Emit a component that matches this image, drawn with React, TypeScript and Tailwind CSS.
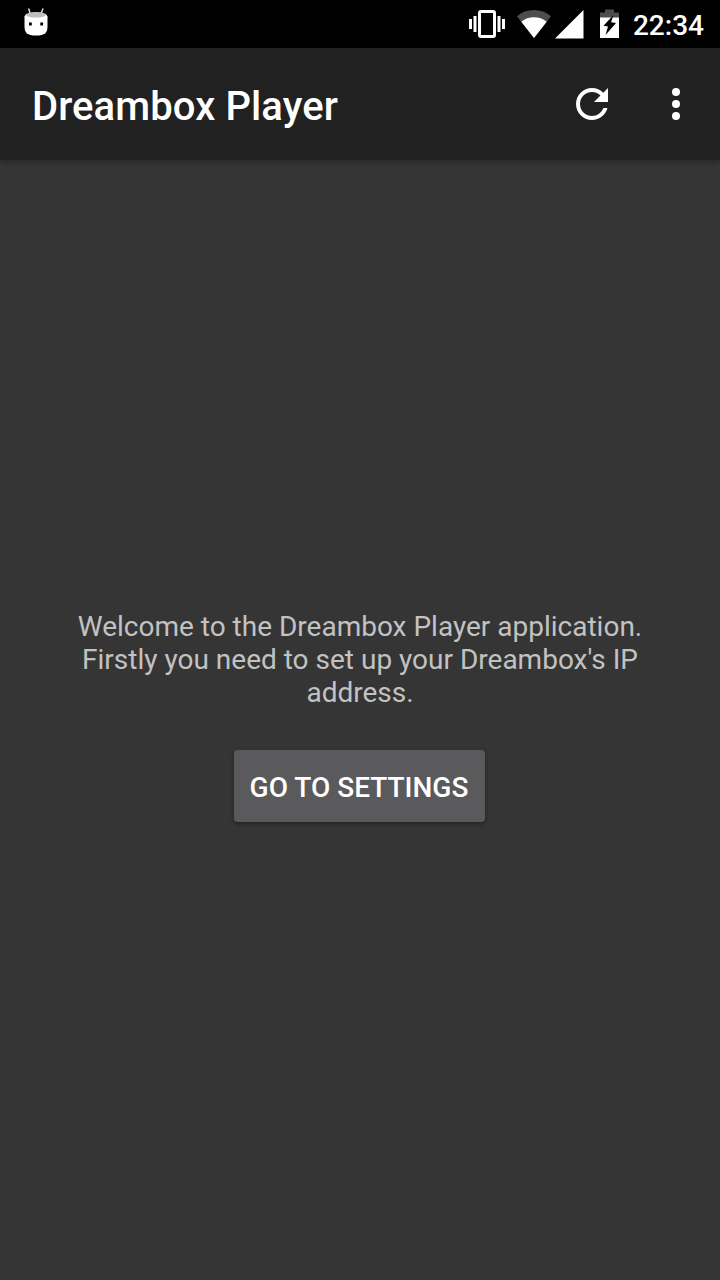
import type { ReactNode } from "react";

function AndroidIcon() {
    return (
        <svg width="24" height="28" viewBox="0 0 24 28" className="block">
            <path d="M6 5L4.8 1M17.4 5l1.4-4" stroke="#d8d8d8" strokeWidth="1.5" strokeLinecap="round" />
            <path d="M0.5 8.500C1.500 5.500 6 4.300 12 4.300s10.500 1.200 11.500 4.200v9.500c0 7-2.500 9.500-11.500 9.500S.5 25 .5 18z" fill="#fff" />
            <path d="M1.800 7.300C3.500 5.200 7.500 4.500 12 4.500s8.500.7 10.200 2.800c-1.700 1.700-5.700 2.300-10.200 2.300S3.500 9 1.800 7.300z" fill="#bdbdbd" />
            <path d="M5 14.500h2.800v3H5zM16.300 14.500h2.800v3h-2.800z" fill="#000" />
        </svg>
    );
}

function VibrateIcon() {
    return (
        <svg width="36" height="28" viewBox="0 0 36 28" className="block">
            <rect x="10.500" y="1.500" width="15" height="25" rx="1.500" fill="none" stroke="#fff" strokeWidth="3" />
            <path d="M0 9h3v10H0zM4.500 6h3v16h-3zM28.500 6h3v16h-3zM33 9h3v10h-3z" fill="#fff" />
        </svg>
    );
}

function WifiIcon() {
    return (
        <svg width="34" height="28" viewBox="0 0 34 28" className="block">
            <path d="M17 28L0 6.300C5 2.200 10.700 0 17 0s12 2.200 17 6.300z" fill="#4d4d4d" />
            <path d="M17 28L4.300 11.700C8 8.800 12.300 7.300 17 7.300s9 1.500 12.700 4.400z" fill="#fff" />
        </svg>
    );
}

function SignalIcon() {
    return (
        <svg width="29" height="29" viewBox="0 0 29 29" className="block">
            <path d="M0 28.500L28.500 0v28.500z" fill="#fff" />
        </svg>
    );
}

function BatteryIcon() {
    return (
        <svg width="19" height="28" viewBox="0 0 19 28" className="block overflow-visible">
            <path d="M5-.5h9v3h5V8H0V2.500h5z" fill="#4d4d4d" />
            <path d="M0 7.500h19V28H0z" fill="#fff" />
            <path d="M13.500 5L11 12.200l5 .8L5.500 25l2.500-8.500-4.500-.8z" fill="#000" />
        </svg>
    );
}

function RefreshIcon() {
    return (
        <svg width="48" height="48" viewBox="0 0 24 24" fill="#fff" className="block">
            <path d="M17.65 6.35C16.2 4.9 14.21 4 12 4c-4.42 0-7.99 3.58-7.99 8s3.57 8 7.99 8c3.73 0 6.84-2.55 7.73-6h-2.080c-.82 2.33-3.040 4-5.650 4-3.310 0-6-2.690-6-6s2.690-6 6-6c1.660 0 3.140.69 4.220 1.780L13 11h7V4l-2.350 2.350z" />
        </svg>
    );
}

function MoreIcon() {
    return (
        <svg width="48" height="48" viewBox="0 0 24 24" fill="#fff" className="block">
            <circle cx="12" cy="6" r="2" />
            <circle cx="12" cy="12" r="2" />
            <circle cx="12" cy="18" r="2" />
        </svg>
    );
}

function IconButton({ label, children }: { label: string; children: ReactNode }) {
    return (
        <button type="button" aria-label={label} className="cursor-pointer">
            {children}
        </button>
    );
}

function StatusBar() {
    return (
        <div className="flex h-12 items-center justify-between bg-black pl-6 pr-4">
            <div className="-mt-1">
                <AndroidIcon />
            </div>
            <div className="flex items-center">
                <VibrateIcon />
                <div className="ml-3">
                    <WifiIcon />
                </div>
                <div className="ml-1">
                    <SignalIcon />
                </div>
                <div className="ml-4">
                    <BatteryIcon />
                </div>
                <span className="ml-3.5 pt-0.5 text-[28px] leading-[33px] font-medium text-white">22:34</span>
            </div>
        </div>
    );
}

export default function App() {
    return (
        <div className="flex h-[1280px] w-[720px] flex-col bg-[#353535] font-[Roboto,sans-serif]">
            <StatusBar />
            <header className="flex h-28 items-center justify-between bg-[#212121] pl-8 pr-5 shadow-[0_2px_6px_rgba(0,0,0,0.3)]">
                <h1 className="pt-1.5 text-[40px] tracking-[0.1px] font-medium text-white">Dreambox Player</h1>
                <div className="flex gap-9">
                    <IconButton label="Refresh">
                        <RefreshIcon />
                    </IconButton>
                    <IconButton label="More options">
                        <MoreIcon />
                    </IconButton>
                </div>
            </header>
            <main className="flex flex-1 flex-col items-center justify-center px-16 pb-[9px]">
                <p className="text-center text-[28px] leading-[33px] text-[#c2c2c2]">
                    Welcome to the Dreambox Player application. Firstly you need to set up your Dreambox's IP address.
                </p>
                <button
                    type="button"
                    className="mt-[41px] mr-0.5 h-[72px] w-[251px] cursor-pointer rounded-[4px] bg-[#5a5a5c] pt-1 text-[28px] font-medium whitespace-nowrap text-white uppercase shadow-[0_2px_4px_rgba(0,0,0,0.35)]"
                >
                    Go to settings
                </button>
            </main>
        </div>
    );
}
